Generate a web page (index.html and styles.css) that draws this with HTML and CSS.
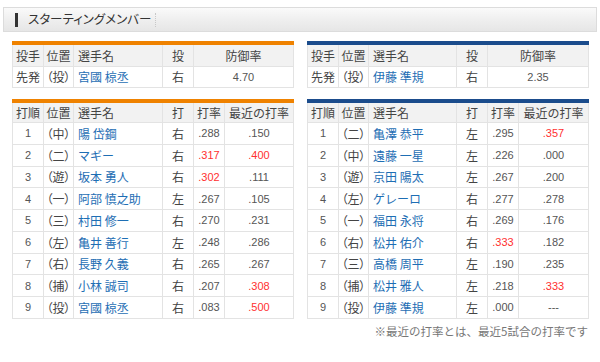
FILE: index.html
```html
<!DOCTYPE html>
<html lang="ja">
<head>
<meta charset="utf-8">
<link rel="stylesheet" href="styles.css">
</head>
<body>
<div class="page">
  <div class="title-bar">
    <span class="title-mark"></span>
    <span class="title-text">スターティングメンバー</span>
    <span class="title-sep"></span>
  </div>
  <div class="columns">
    <div class="col">
      <table class="tbl pitch home">
        <colgroup><col class="c1"><col class="c2"><col class="c3"><col class="c4"><col class="c5p"></colgroup>
        <tr class="head"><th>投手</th><th>位置</th><th class="l">選手名</th><th>投</th><th>防御率</th></tr>
        <tr><td class="jp">先発</td><td class="jp">（投）</td><td class="name">宮國 椋丞</td><td class="jp">右</td><td class="num">4.70</td></tr>
      </table>
      <table class="tbl lineup home">
        <colgroup><col class="c1"><col class="c2"><col class="c3"><col class="c4"><col class="c5"><col class="c6"></colgroup>
        <tr class="head"><th>打順</th><th>位置</th><th class="l">選手名</th><th>打</th><th>打率</th><th>最近の打率</th></tr>
        <tr><td class="num">1</td><td class="jp">（中）</td><td class="name">陽 岱鋼</td><td class="jp">右</td><td class="num">.288</td><td class="num">.150</td></tr>
        <tr><td class="num">2</td><td class="jp">（二）</td><td class="name">マギー</td><td class="jp">右</td><td class="num red">.317</td><td class="num red">.400</td></tr>
        <tr><td class="num">3</td><td class="jp">（遊）</td><td class="name">坂本 勇人</td><td class="jp">右</td><td class="num red">.302</td><td class="num">.111</td></tr>
        <tr><td class="num">4</td><td class="jp">（一）</td><td class="name">阿部 慎之助</td><td class="jp">左</td><td class="num">.267</td><td class="num">.105</td></tr>
        <tr><td class="num">5</td><td class="jp">（三）</td><td class="name">村田 修一</td><td class="jp">右</td><td class="num">.270</td><td class="num">.231</td></tr>
        <tr><td class="num">6</td><td class="jp">（左）</td><td class="name">亀井 善行</td><td class="jp">左</td><td class="num">.248</td><td class="num">.286</td></tr>
        <tr><td class="num">7</td><td class="jp">（右）</td><td class="name">長野 久義</td><td class="jp">右</td><td class="num">.265</td><td class="num">.267</td></tr>
        <tr><td class="num">8</td><td class="jp">（捕）</td><td class="name">小林 誠司</td><td class="jp">右</td><td class="num">.207</td><td class="num red">.308</td></tr>
        <tr><td class="num">9</td><td class="jp">（投）</td><td class="name">宮國 椋丞</td><td class="jp">右</td><td class="num">.083</td><td class="num red">.500</td></tr>
      </table>
    </div>
    <div class="col">
      <table class="tbl pitch away">
        <colgroup><col class="c1"><col class="c2"><col class="c3"><col class="c4"><col class="c5p"></colgroup>
        <tr class="head"><th>投手</th><th>位置</th><th class="l">選手名</th><th>投</th><th>防御率</th></tr>
        <tr><td class="jp">先発</td><td class="jp">（投）</td><td class="name">伊藤 準規</td><td class="jp">右</td><td class="num">2.35</td></tr>
      </table>
      <table class="tbl lineup away">
        <colgroup><col class="c1"><col class="c2"><col class="c3"><col class="c4"><col class="c5"><col class="c6"></colgroup>
        <tr class="head"><th>打順</th><th>位置</th><th class="l">選手名</th><th>打</th><th>打率</th><th>最近の打率</th></tr>
        <tr><td class="num">1</td><td class="jp">（二）</td><td class="name">亀澤 恭平</td><td class="jp">左</td><td class="num">.295</td><td class="num red">.357</td></tr>
        <tr><td class="num">2</td><td class="jp">（中）</td><td class="name">遠藤 一星</td><td class="jp">左</td><td class="num">.226</td><td class="num">.000</td></tr>
        <tr><td class="num">3</td><td class="jp">（遊）</td><td class="name">京田 陽太</td><td class="jp">左</td><td class="num">.267</td><td class="num">.200</td></tr>
        <tr><td class="num">4</td><td class="jp">（左）</td><td class="name">ゲレーロ</td><td class="jp">右</td><td class="num">.277</td><td class="num">.278</td></tr>
        <tr><td class="num">5</td><td class="jp">（一）</td><td class="name">福田 永将</td><td class="jp">右</td><td class="num">.269</td><td class="num">.176</td></tr>
        <tr><td class="num">6</td><td class="jp">（右）</td><td class="name">松井 佑介</td><td class="jp">右</td><td class="num red">.333</td><td class="num">.182</td></tr>
        <tr><td class="num">7</td><td class="jp">（三）</td><td class="name">高橋 周平</td><td class="jp">左</td><td class="num">.190</td><td class="num">.235</td></tr>
        <tr><td class="num">8</td><td class="jp">（捕）</td><td class="name">松井 雅人</td><td class="jp">左</td><td class="num">.218</td><td class="num red">.333</td></tr>
        <tr><td class="num">9</td><td class="jp">（投）</td><td class="name">伊藤 準規</td><td class="jp">左</td><td class="num">.000</td><td class="num">---</td></tr>
      </table>
      <p class="note">※最近の打率とは、最近5試合の打率です</p>
    </div>
  </div>
</div>
</body>
</html>
```

FILE: styles.css
```css
* { box-sizing: border-box; }
html, body { margin: 0; padding: 0; background: #fff; }
body {
  font-family: "Noto Sans CJK JP", "Liberation Sans", sans-serif;
  color: #333;
  width: 600px;
  height: 362px;
  overflow: hidden;
}
.page { padding: 7px 3px 0 3px; }
.title-bar {
  height: 25px;
  border: 1px solid #dcdcdc;
  background: linear-gradient(#fafafa, #efefef 50%, #e6e6e6);
  display: flex;
  align-items: center;
  padding-left: 11px;
}
.title-mark {
  width: 3px;
  height: 14px;
  background: #333;
  margin-right: 10px;
}
.title-text {
  font-size: 12.5px;
  color: #333;
  line-height: 1;
  font-feature-settings: "palt";
}
.title-sep {
  width: 0;
  height: 14px;
  border-left: 1px dotted #c8c8c8;
  margin-left: 4px;
}
.columns {
  display: grid;
  grid-template-columns: 281px 281px;
  column-gap: 14px;
  padding: 9px 0 0 9px;
}
.col { display: flex; flex-direction: column; }
.tbl {
  width: 281px;
  border-collapse: collapse;
  table-layout: fixed;
  border-top: 4px solid #ef8200;
}
.tbl.away { border-top-color: #1b4c8c; }
.tbl.lineup { margin-top: 11px; }
.c1 { width: 31px; }
.c2 { width: 30px; }
.c3 { width: 89px; }
.c4 { width: 31px; }
.c5 { width: 31px; }
.c6 { width: 69px; }
.c5p { width: 100px; }
.away .c3 { width: 88px; }
.away .c6 { width: 70px; }
.away .c5p { width: 101px; }
th, td {
  border: 1px solid #e3e3e3;
  text-align: center;
  padding: 0;
  white-space: nowrap;
  overflow: visible;
}
th {
  background: #f2f2f2;
  font-weight: normal;
  font-size: 12px;
  color: #444;
  height: 23px;
}
.lineup th { height: 22px; }
td { height: 21.75px; font-size: 12px; color: #444; }
td.jp { font-feature-settings: "palt"; }
.pitch td { height: 21px; }
th.l, td.name { text-align: left; padding-left: 4px; }
td.name { color: #1e6eb4; }
td.num {
  font-family: "Liberation Sans", Arial, sans-serif;
  font-size: 11px;
  color: #555;
}
td.red { color: #ff3030; }
.note {
  margin: 4px 0 0 0;
  text-align: right;
  font-size: 11.5px;
  color: #777;
  line-height: 16px;
}
```
